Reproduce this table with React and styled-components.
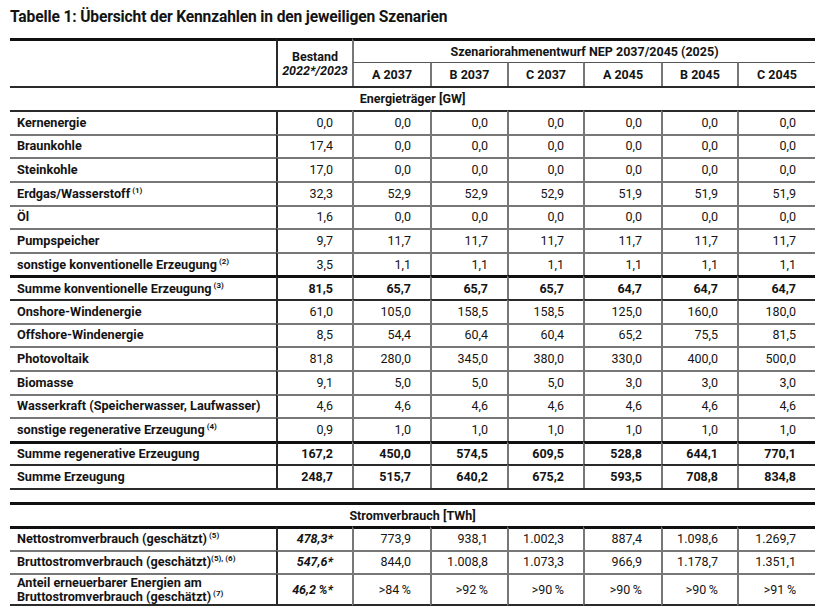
import React from "react"
import styled, { createGlobalStyle } from "styled-components"

const GlobalStyle = createGlobalStyle`
  html, body {
    margin: 0;
    padding: 0;
    background: #fff;
  }
  body {
    font-family: Roboto, "Liberation Sans", sans-serif;
    color: #141414;
  }
`

const LINES = {
  none: "none",
  hair: "1px solid #555",
  thin: "2px solid #777",
  mid: "2px solid #2a2a2a",
  thick: "3px solid #111",
}

const PADS = {
  left: "0 0 0 7px",
  center: "0 4px",
  right: "0 19px 0 0",
}

const Page = styled.div`
  width: 825px;
  padding: 8px 10px 0;
  box-sizing: border-box;
`

const Title = styled.h1`
  margin: 0;
  height: 30px;
  font-size: 15.6px;
  line-height: 18px;
  font-weight: 700;
  letter-spacing: -0.15px;
`

const Table = styled.table`
  width: 805px;
  table-layout: fixed;
  border-collapse: separate;
  border-spacing: 0;
  font-size: 12.5px;
  line-height: 14px;
`

const Row = styled.tr`
  height: ${(p) => p.$h}px;
`

const Cell = styled.td`
  padding: ${(p) => PADS[p.$align || "right"]};
  text-align: ${(p) => p.$align || "right"};
  vertical-align: middle;
  font-size: ${(p) => (p.$align === "left" ? "12.7px" : "12.5px")};
  font-weight: ${(p) => (p.$bold ? 700 : 400)};
  font-style: ${(p) => (p.$italic ? "italic" : "normal")};
  border-top: ${(p) => LINES[p.$top || "none"]};
  border-left: ${(p) => LINES[p.$left || "none"]};
  border-bottom: ${(p) => LINES[p.$bottom || "none"]};
  white-space: nowrap;
`

const Sup = styled.sup`
  font-size: 8px;
  line-height: 0;
  vertical-align: 5px;
  margin-left: ${(p) => (p.$tight ? "0" : "2px")};
  font-weight: 700;
`

const Stack = styled.div`
  line-height: 14px;
`

const Note = ({ n, tight }) => <Sup $tight={tight}>{n}</Sup>

const gen = [
  { label: "Kernenergie", v: ["0,0", "0,0", "0,0", "0,0", "0,0", "0,0", "0,0"] },
  { label: "Braunkohle", v: ["17,4", "0,0", "0,0", "0,0", "0,0", "0,0", "0,0"] },
  { label: "Steinkohle", v: ["17,0", "0,0", "0,0", "0,0", "0,0", "0,0", "0,0"] },
  { label: "Erdgas/Wasserstoff", note: "(1)", v: ["32,3", "52,9", "52,9", "52,9", "51,9", "51,9", "51,9"] },
  { label: "Öl", v: ["1,6", "0,0", "0,0", "0,0", "0,0", "0,0", "0,0"] },
  { label: "Pumpspeicher", v: ["9,7", "11,7", "11,7", "11,7", "11,7", "11,7", "11,7"] },
  { label: "sonstige konventionelle Erzeugung", note: "(2)", v: ["3,5", "1,1", "1,1", "1,1", "1,1", "1,1", "1,1"] },
  { label: "Summe konventionelle Erzeugung", note: "(3)", sum: true, top: "thick", v: ["81,5", "65,7", "65,7", "65,7", "64,7", "64,7", "64,7"] },
  { label: "Onshore-Windenergie", top: "mid", v: ["61,0", "105,0", "158,5", "158,5", "125,0", "160,0", "180,0"] },
  { label: "Offshore-Windenergie", v: ["8,5", "54,4", "60,4", "60,4", "65,2", "75,5", "81,5"] },
  { label: "Photovoltaik", v: ["81,8", "280,0", "345,0", "380,0", "330,0", "400,0", "500,0"] },
  { label: "Biomasse", v: ["9,1", "5,0", "5,0", "5,0", "3,0", "3,0", "3,0"] },
  { label: "Wasserkraft (Speicherwasser, Laufwasser)", v: ["4,6", "4,6", "4,6", "4,6", "4,6", "4,6", "4,6"] },
  { label: "sonstige regenerative Erzeugung", note: "(4)", v: ["0,9", "1,0", "1,0", "1,0", "1,0", "1,0", "1,0"] },
  { label: "Summe regenerative Erzeugung", sum: true, top: "thick", v: ["167,2", "450,0", "574,5", "609,5", "528,8", "644,1", "770,1"] },
  { label: "Summe Erzeugung", sum: true, top: "mid", v: ["248,7", "515,7", "640,2", "675,2", "593,5", "708,8", "834,8"] },
]

const use = [
  {
    label: "Nettostromverbrauch (geschätzt)",
    note: "(5)",
    top: "thick",
    h: 23.5,
    v: ["478,3*", "773,9", "938,1", "1.002,3", "887,4", "1.098,6", "1.269,7"],
  },
  {
    label: "Bruttostromverbrauch (geschätzt)",
    note: "(5), (6)",
    tight: true,
    top: "thin",
    h: 23.5,
    v: ["547,6*", "844,0", "1.008,8", "1.073,3", "966,9", "1.178,7", "1.351,1"],
  },
  {
    label: ["Anteil erneuerbarer Energien am", "Bruttostromverbrauch (geschätzt)"],
    note: "(7)",
    top: "thin",
    bottom: "mid",
    h: 33,
    v: ["46,2\u2009%*", ">84\u2009%", ">92\u2009%", ">90\u2009%", ">90\u2009%", ">90\u2009%", ">91\u2009%"],
  },
]

const scenarios = ["A 2037", "B 2037", "C 2037", "A 2045", "B 2045", "C 2045"]
const widths = [266, 76, 78, 77, 76, 78, 76, 78]

const leftLine = (i) => (i === 0 ? "none" : i === 1 ? "mid" : "thin")

const DataRow = ({ row, h, top, bottom, energyTop }) => (
  <Row $h={h}>
    <Cell $align="left" $bold $top={top} $bottom={bottom}>
      {Array.isArray(row.label) ? (
        <Stack>
          {row.label[0]}
          <br />
          {row.label[1]}
          <Note n={row.note} />
        </Stack>
      ) : (
        <>
          {row.label}
          {row.note && <Note n={row.note} tight={row.tight} />}
        </>
      )}
    </Cell>
    {row.v.map((val, i) => (
      <Cell
        key={i}
        $left={leftLine(i + 1)}
        $top={top}
        $bottom={bottom}
        $bold={row.sum || (energyTop && i === 0)}
        $italic={energyTop && i === 0}
      >
        {val}
      </Cell>
    ))}
  </Row>
)

export default function App() {
  return (
    <Page>
      <GlobalStyle />
      <Title>Tabelle 1: Übersicht der Kennzahlen in den jeweiligen Szenarien</Title>
      <Table>
        <colgroup>
          {widths.map((w, i) => (
            <col key={i} style={{ width: w }} />
          ))}
        </colgroup>
        <tbody>
          <Row $h={24}>
            <Cell rowSpan={2} $top="thick" $align="left" />
            <Cell rowSpan={2} $top="thick" $left="mid" $align="center" $bold>
              Bestand
              <br />
              <i>2022*/2023</i>
            </Cell>
            <Cell colSpan={6} $top="thick" $left="thin" $align="center" $bold>
              Szenariorahmenentwurf NEP 2037/2045 (2025)
            </Cell>
          </Row>
          <Row $h={24}>
            {scenarios.map((s) => (
              <Cell key={s} $top="hair" $left="thin" $align="center" $bold>
                {s}
              </Cell>
            ))}
          </Row>
          <Row $h={24}>
            <Cell colSpan={8} $top="mid" $align="center" $bold>
              Energieträger [GW]
            </Cell>
          </Row>
          {gen.map((row, i) => (
            <DataRow key={row.label} row={row} h={23.625} top={row.top || (i === 0 ? "mid" : "thin")} />
          ))}
          <Row $h={14}>
            <Cell colSpan={8} $top="mid" />
          </Row>
          <Row $h={24}>
            <Cell colSpan={8} $top="thick" $align="center" $bold>
              Stromverbrauch [TWh]
            </Cell>
          </Row>
          {use.map((row, i) => (
            <DataRow key={i} row={row} h={row.h} top={row.top} bottom={row.bottom} energyTop />
          ))}
        </tbody>
      </Table>
    </Page>
  )
}
